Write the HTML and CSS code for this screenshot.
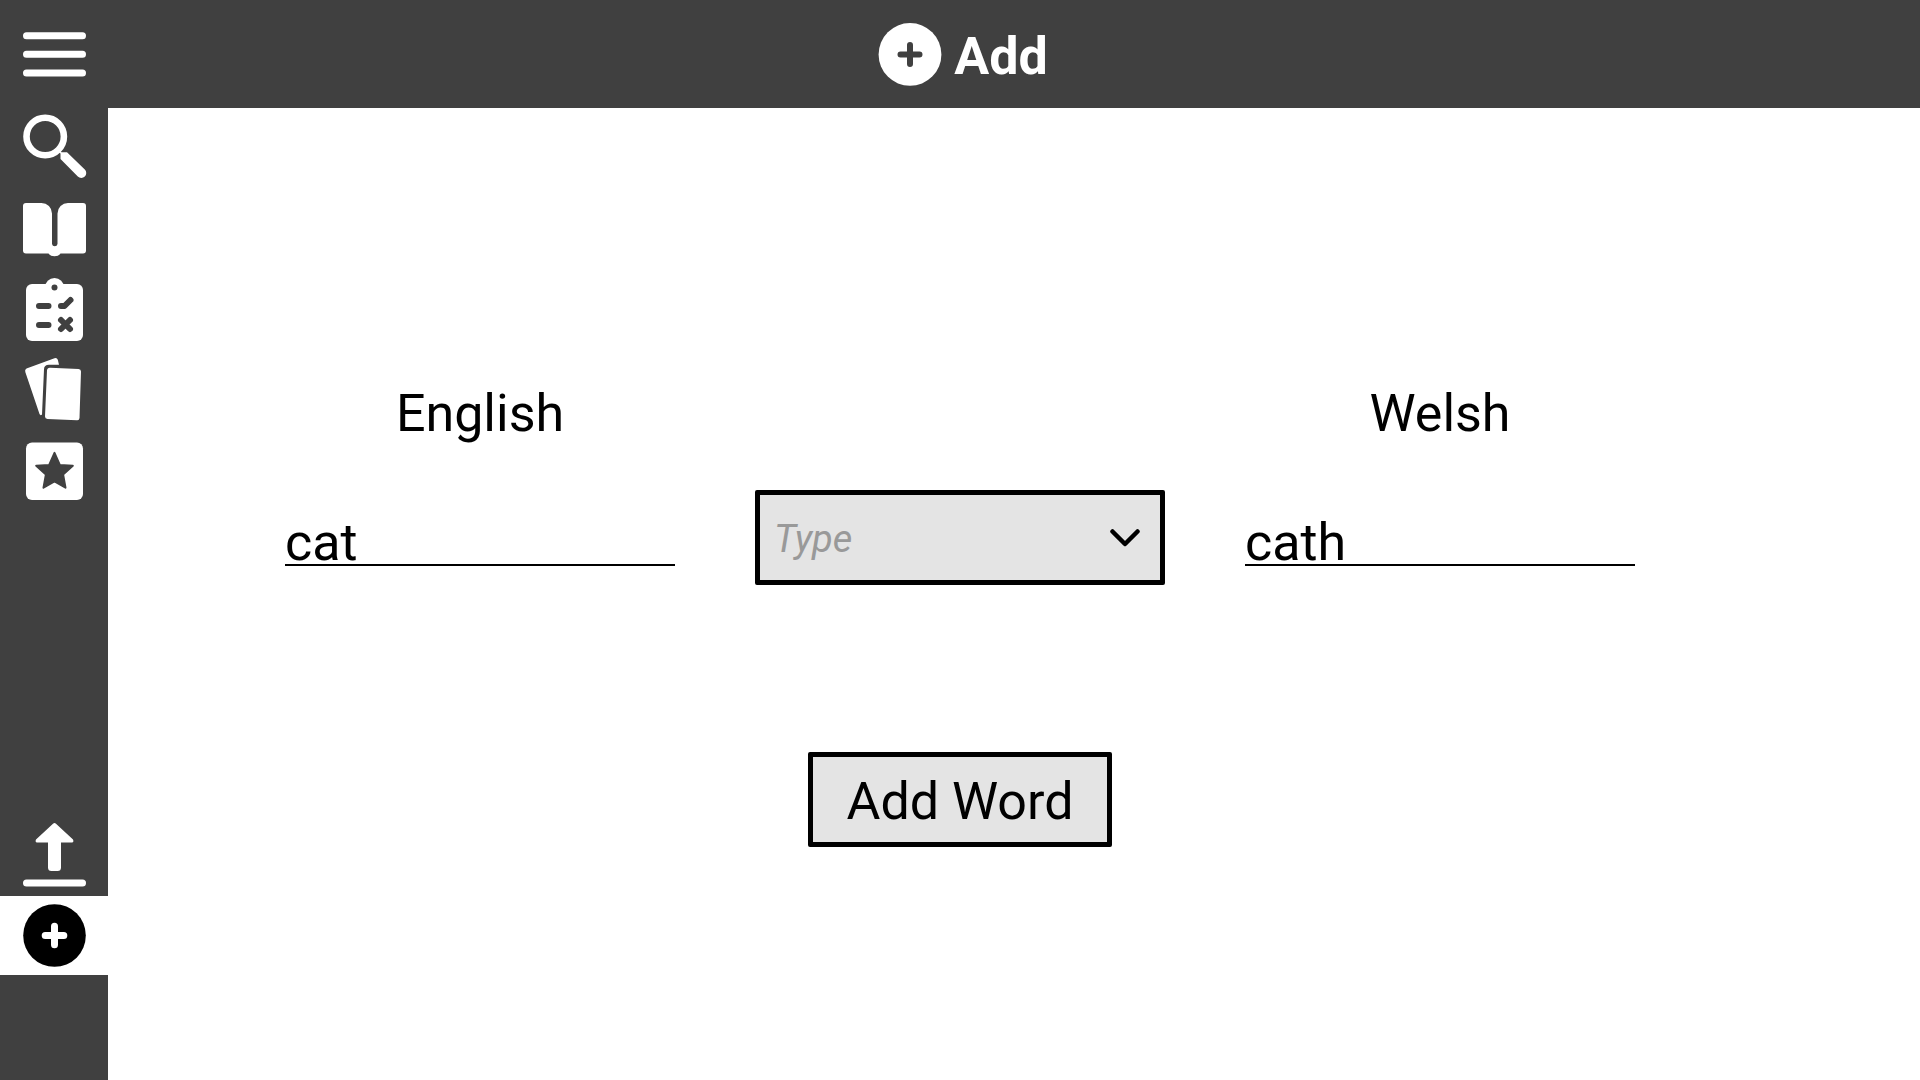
FILE: index.html
```html
<!DOCTYPE html>
<html lang="en">
<head>
<meta charset="utf-8">
<meta name="viewport" content="width=device-width, initial-scale=1">
<title>Add</title>
<link rel="stylesheet" href="styles.css">
</head>
<body>
<div class="app">
  <header class="topbar">
    <button class="menu-button" type="button" aria-label="Menu">
      <svg class="menu-icon" viewBox="0 0 108 108" aria-hidden="true">
        <path class="bar" d="M26.5 35.7h56M26.5 54.3h56M26.5 73h56"/>
      </svg>
    </button>
    <h1 class="title">
      <svg class="title-icon" viewBox="0 0 64 64" aria-hidden="true">
        <circle class="fill" cx="32" cy="32.400" r="31.400"/>
        <path class="cut" d="M22.500 32.400h19M32 22.900v19"/>
      </svg>
      <span class="title-text">Add</span>
    </h1>
  </header>
  <div class="body">
    <nav class="sidebar" aria-label="Sections">
      <div class="nav-group">
        <a class="nav-item" href="#search" aria-label="Search">
          <svg class="nav-icon" viewBox="0 0 108 79" aria-hidden="true">
            <circle class="ring" cx="45.2" cy="28.5" r="18.7"/>
            <path class="fill" d="M60 43l1.500 1.200H67L84.800 61.500a4.900 4.900 0 0 1-7 7L60.500 51v-5.500l-1.500-1.500z"/>
          </svg>
        </a>
        <a class="nav-item" href="#dictionary" aria-label="Dictionary">
          <svg class="nav-icon" viewBox="0 0 108 79" aria-hidden="true">
            <path class="fill" d="M26 15h15.500a10.500 10.500 0 0 1 10.500 10.500V56a2.800 2.800 0 0 0 5.500 0V25.500A10.500 10.500 0 0 1 68 15h15a3 3 0 0 1 3 3v44.500a3 3 0 0 1-3 3H60.500a6.500 4.500 0 0 1-12 0H26a3 3 0 0 1-3-3V18a3 3 0 0 1 3-3z"/>
          </svg>
        </a>
        <a class="nav-item" href="#test" aria-label="Test">
          <svg class="nav-icon" viewBox="0 0 108 79" aria-hidden="true">
            <rect class="fill" x="26" y="16" width="57" height="57" rx="6"/>
            <circle class="fill" cx="54.500" cy="19.500" r="9.500"/>
            <circle class="hole" cx="54.500" cy="19.500" r="3"/>
            <path class="cut" d="M39 38h9.500M39 57h9.500M61 38h3.500l6-6M61 52l9 9M70 52l-9 9"/>
          </svg>
        </a>
        <a class="nav-item" href="#flashcards" aria-label="Flashcards">
          <svg class="nav-icon" viewBox="0 0 108 79" aria-hidden="true">
            <path class="fill" d="M26.500 20.500L54.500 10.200q2.500-.7 3.300 1.500l1.200 5H49q-5 0-5 4.500L42 66.500q-1.500 1.500-2.500-.5L25.300 24q-.8-2.500 1.200-3.500z"/>
            <path class="fill" d="M50 19.700L78.500 21q2.500.2 2.500 2.500L79.500 70q-.2 2.500-2.500 2.300L47.500 71q-2.500-.2-2.500-2.500L47 22.500q.3-2.900 3-2.800z"/>
          </svg>
        </a>
        <a class="nav-item" href="#favourites" aria-label="Favourites">
          <svg class="nav-icon" viewBox="0 0 108 79" aria-hidden="true">
            <rect class="fill" x="26" y="14.500" width="57" height="57.500" rx="6"/>
            <path class="star" d="M54.500 24.800l5.300 12.200 13 .7-9.700 8.800 2.400 13.200-11-6.200-11 6.200 2.400-13.200-9.700-8.800 13-.7z"/>
          </svg>
        </a>
      </div>
      <div class="nav-group">
        <a class="nav-item" href="#upload" aria-label="Upload">
          <svg class="nav-icon" viewBox="0 0 108 79" aria-hidden="true">
            <path class="fill" d="M53 7.700q1.500-1.200 3 0L73 23.500q1.200 2.500-1 3H61V51.500q0 3.500-3.500 3.500h-6q-3.500 0-3.500-3.500v-25H37q-2.200-.5-1-3z"/>
            <path class="bar" d="M26.500 67h56"/>
          </svg>
        </a>
        <a class="nav-item current" href="#add" aria-label="Add" aria-current="page">
          <svg class="nav-icon" viewBox="0 0 108 79" aria-hidden="true">
            <circle class="fill" cx="54.500" cy="39.500" r="31.300"/>
            <path class="bar" d="M45.200 39.500h18.600M54.500 30.200v18.600"/>
          </svg>
        </a>
      </div>
    </nav>
    <main class="content">
      <form class="word-form">
        <label class="label english" for="english">English</label>
        <label class="label welsh" for="welsh">Welsh</label>
        <input class="word-input" id="english" type="text" value="cat">
        <div class="type-field">
          <select class="type-select" aria-label="Type">
            <option value="" selected>Type</option>
            <option>Noun</option>
            <option>Verb</option>
            <option>Adjective</option>
          </select>
          <svg class="chevron" viewBox="0 0 30 18" aria-hidden="true"><path d="M2.500 2.500L15 15 27.500 2.500"/></svg>
        </div>
        <input class="word-input" id="welsh" type="text" value="cath">
        <button class="submit" type="button">Add Word</button>
      </form>
    </main>
  </div>
</div>
</body>
</html>
```
FILE: styles.css
```css
* {
  box-sizing: border-box;
}

body {
  margin: 0;
  background: #fff;
  color: #000;
  font-family: Roboto, sans-serif;
  font-size: 52px;
  line-height: 60px;
}

.app {
  display: flex;
  flex-direction: column;
  min-height: 100vh;
}

/* Top bar */
.topbar {
  display: grid;
  grid-template-columns: 108px 1fr 102px;
  height: 108px;
  background: #404040;
  color: #fff;
}

.menu-button {
  padding: 0;
  border: 0;
  background: none;
  color: inherit;
}

.menu-icon,
.nav-icon {
  display: block;
  width: 100%;
}

.title {
  display: flex;
  align-items: center;
  justify-content: center;
  gap: 12px;
  margin: 0;
  font-size: 52px;
  font-weight: 700;
}

.title-icon {
  width: 64px;
  height: 64px;
}

.title-text {
  padding-top: 5px;
}

/* Sidebar */
.body {
  display: flex;
  flex: 1;
}

.sidebar {
  display: flex;
  flex-direction: column;
  flex: none;
  justify-content: space-between;
  width: 108px;
  padding-bottom: 105px;
  background: #404040;
}

.nav-group {
  display: flex;
  flex-direction: column;
  gap: 1px;
}

.nav-item {
  display: block;
  color: #fff;
}

.current {
  background: #fff;
  color: #000;
}

/* Icon parts */
.fill {
  fill: currentColor;
}

.ring {
  fill: none;
  stroke: currentColor;
  stroke-width: 6.6;
}

.bar {
  fill: none;
  stroke: #fff;
  stroke-width: 7;
  stroke-linecap: round;
}

.cut {
  fill: none;
  stroke: #404040;
  stroke-width: 6;
  stroke-linecap: round;
  stroke-linejoin: round;
}

.hole {
  fill: #404040;
}

.star {
  fill: #404040;
  stroke: #404040;
  stroke-width: 2;
  stroke-linejoin: round;
}

/* Form */
.content {
  flex: 1;
  padding: 276px 240px 0 132px;
}

.word-form {
  display: grid;
  grid-template-columns: repeat(3, 1fr);
  align-items: center;
  justify-items: center;
}

.label {
  margin-bottom: 46px;
}

.english {
  grid-column: 1;
}

.welsh {
  grid-column: 3;
}

.word-input {
  width: 390px;
  height: 57px;
  padding: 11px 0 0;
  border: 0;
  border-bottom: 2px solid #000;
  border-radius: 0;
  outline: 0;
  background: none;
  color: inherit;
  font: inherit;
  line-height: 44px;
}

.type-field {
  position: relative;
  width: 410px;
}

.type-select {
  display: block;
  width: 100%;
  height: 95px;
  padding: 2px 64px 0 14px;
  border: 5px solid #000;
  border-radius: 2px;
  appearance: none;
  background: #e4e4e4;
  color: #999;
  font: italic 38px Roboto, sans-serif;
}

.chevron {
  position: absolute;
  top: 39px;
  right: 25px;
  width: 30px;
  height: 18px;
  fill: none;
  stroke: #000;
  stroke-width: 4.5;
  stroke-linecap: round;
  stroke-linejoin: round;
  pointer-events: none;
}

.submit {
  grid-column: 2;
  width: 304px;
  height: 95px;
  margin-top: 167px;
  padding: 5px 0 0;
  border: 5px solid #000;
  border-radius: 2px;
  background: #e4e4e4;
  color: inherit;
  font: inherit;
}
```
